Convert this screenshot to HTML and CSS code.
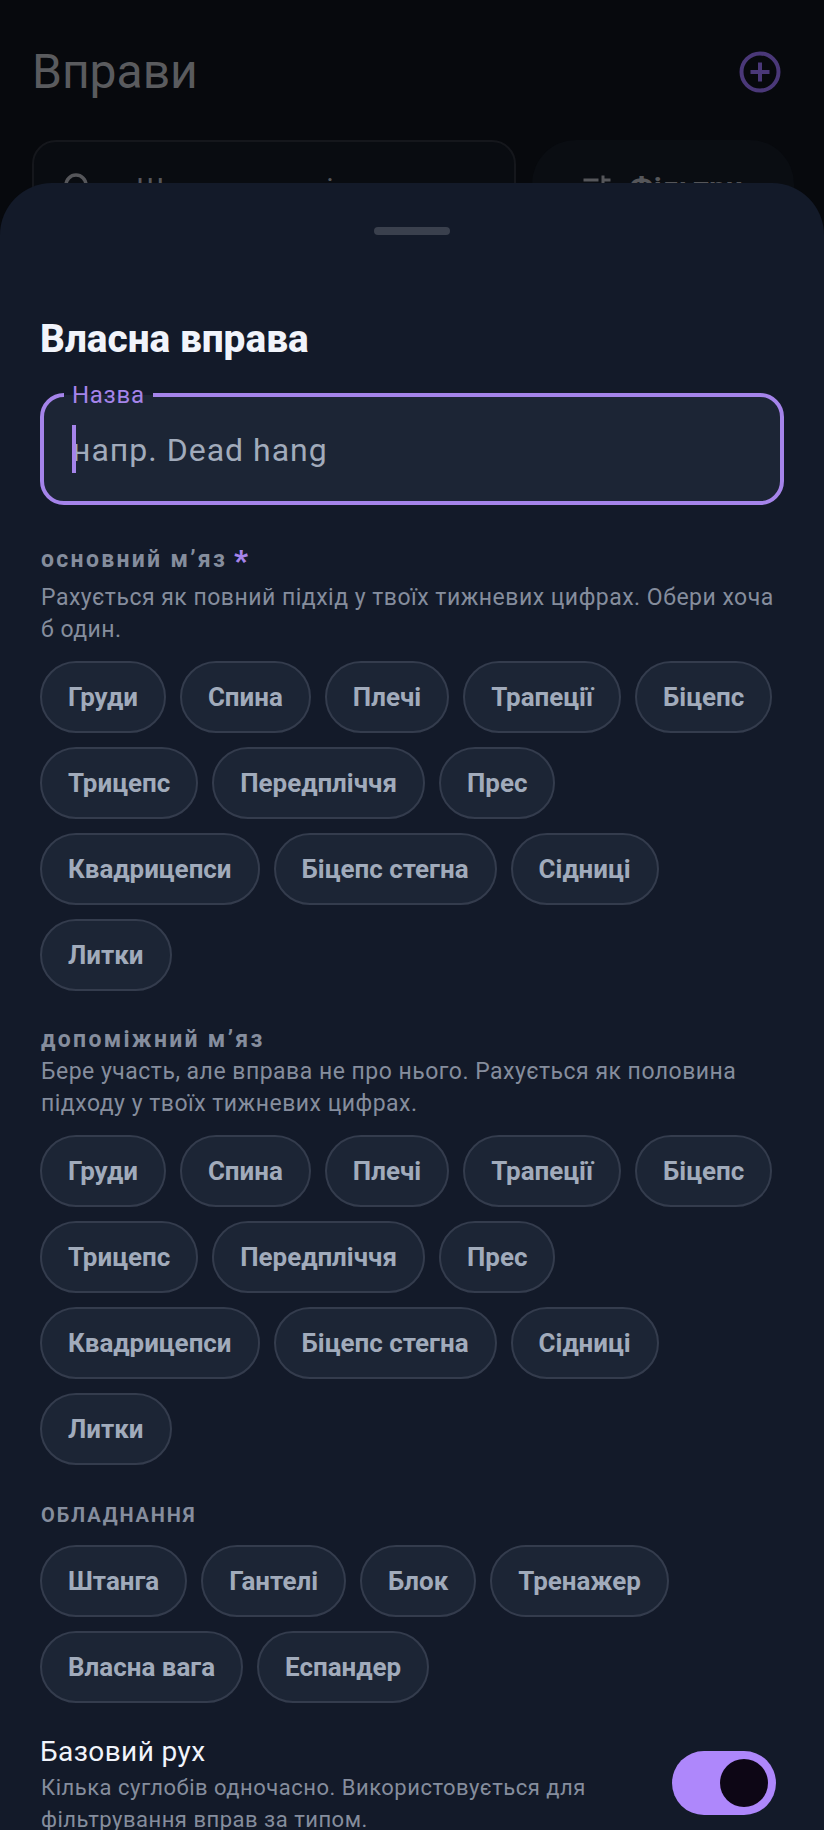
FILE: index.html
```html
<!DOCTYPE html>
<html lang="uk">
<head>
<meta charset="utf-8">
<title>Вправи</title>
<link rel="stylesheet" href="styles.css">
</head>
<body>
<div class="app">
  <header class="top">
    <h1 class="top-title">Вправи</h1>
    <svg class="add-icon" width="44" height="44" viewBox="0 0 44 44" fill="none" stroke="#4a3878" stroke-width="4"><circle cx="22" cy="22" r="18.5"/><path d="M22 12.5v19M12.5 22h19"/></svg>
  </header>
  <div class="tools">
    <div class="search">
      <svg width="32" height="32" viewBox="0 0 32 32" fill="none" stroke="#55565a" stroke-width="3.4"><circle cx="14" cy="14" r="10"/><path d="M21.5 21.5l8 8"/></svg>
      <span class="search-text">Шукати в назві</span>
    </div>
    <div class="filter">
      <svg class="filter-icon" width="36" height="36" viewBox="0 0 24 24" fill="#55565a"><path d="M3 17v2h6v-2H3zM3 5v2h10V5H3zm10 16v-2h8v-2h-8v-2h-2v6h2zM7 9v2H3v2h4v2h2V9H7zm14 4v-2H11v2h10zm-6-4h2V7h4V5h-4V3h-2v6z"/></svg>
      <span>Фільтри</span>
    </div>
  </div>
  <section class="sheet">
    <div class="handle"></div>
    <h2 class="sheet-title">Власна вправа</h2>
    <div class="field">
      <span class="field-label">Назва</span>
      <i class="caret"></i>
      <span class="placeholder">напр. Dead hang</span>
    </div>

    <h3 class="group-label primary">основний м’яз <b class="req">*</b></h3>
    <p class="hint">Рахується як повний підхід у твоїх тижневих цифрах. Обери хоча б один.</p>
    <div class="chips">
      <span class="chip">Груди</span><span class="chip">Спина</span><span class="chip">Плечі</span><span class="chip">Трапеції</span><span class="chip">Біцепс</span>
      <span class="chip">Трицепс</span><span class="chip">Передпліччя</span><span class="chip">Прес</span>
      <span class="chip">Квадрицепси</span><span class="chip">Біцепс стегна</span><span class="chip">Сідниці</span>
      <span class="chip">Литки</span>
    </div>

    <h3 class="group-label secondary">допоміжний м’яз</h3>
    <p class="hint tight">Бере участь, але вправа не про нього. Рахується як половина підходу у твоїх тижневих цифрах.</p>
    <div class="chips">
      <span class="chip">Груди</span><span class="chip">Спина</span><span class="chip">Плечі</span><span class="chip">Трапеції</span><span class="chip">Біцепс</span>
      <span class="chip">Трицепс</span><span class="chip">Передпліччя</span><span class="chip">Прес</span>
      <span class="chip">Квадрицепси</span><span class="chip">Біцепс стегна</span><span class="chip">Сідниці</span>
      <span class="chip">Литки</span>
    </div>

    <h3 class="group-label equip">ОБЛАДНАННЯ</h3>
    <div class="chips">
      <span class="chip">Штанга</span><span class="chip">Гантелі</span><span class="chip">Блок</span><span class="chip">Тренажер</span>
      <span class="chip">Власна вага</span><span class="chip">Еспандер</span>
    </div>

    <div class="toggle-row">
      <div class="toggle-text">
        <div class="toggle-title">Базовий рух</div>
        <p class="hint small">Кілька суглобів одночасно. Використовується для фільтрування вправ за типом.</p>
      </div>
      <div class="switch"><i class="knob"></i></div>
    </div>
  </section>
</div>
</body>
</html>
```
FILE: styles.css
```css
* { box-sizing: border-box; }
html, body { margin: 0; padding: 0; }
body { background: #07090d; font-family: Roboto, "Noto Sans", sans-serif; }
.app { position: relative; width: 824px; height: 1830px; overflow: hidden; background: #07090d; }

.top { display: flex; align-items: center; justify-content: space-between; padding: 42px 42px 0 32px; height: 102px; }
.top-title { margin: 0; font-size: 48px; font-weight: 400; color: #5a5b5e; line-height: 56px; }
.add-icon { display: block; }

.tools { display: flex; gap: 16px; padding: 38px 30px 0 32px; }
.search { width: 484px; height: 112px; display: flex; gap: 42px; padding: 29px 28px; border: 2px solid #15171c; border-radius: 24px; background: #090c11; color: #55565a; font-size: 30px; white-space: nowrap; }
.search-text { letter-spacing: -1.1px; }
.filter { flex: 1; height: 112px; display: flex; gap: 14px; justify-content: center; padding: 30px 4px 30px 0; border-radius: 44px; background: #0a0d12; color: #55565a; font-size: 30px; font-weight: 700; }
.filter-icon { margin-top: 1px; }

.sheet { position: absolute; left: 0; top: 183px; width: 824px; height: 1647px; overflow: hidden; padding: 0 40px; background: #131a29; border-radius: 52px 52px 0 0; }
.handle { width: 76px; height: 8px; margin: 44px auto 0; border-radius: 4px; background: #3a404d; }
.sheet-title { margin: 80px 0 0; font-size: 38.8px; line-height: 48px; font-weight: 800; color: #f1f4fb; }

.field { position: relative; height: 112px; margin-top: 30px; padding: 2px 32px 0; display: flex; align-items: center; background: #1c2535; border: 4px solid #a584ea; border-radius: 24px; }
.field-label { position: absolute; left: 20px; top: -14px; padding: 0 8px; font-size: 24px; line-height: 24px; letter-spacing: 0.7px; color: #a584ea; background: linear-gradient(#131a29 50%, #1c2535 50%); }
.caret { position: absolute; left: 28px; top: 28px; width: 4px; height: 48px; background: #a584ea; }
.placeholder { font-size: 32px; letter-spacing: 1px; color: #a1abbb; margin-left: -4px; }

.group-label { margin: 0; padding-left: 1px; font-size: 23px; line-height: 30px; font-weight: 700; letter-spacing: 2.3px; color: #858d9d; }
.primary { margin-top: 40px; }
.secondary { margin-top: 34px; }
.equip { margin-top: 35px; font-size: 20px; letter-spacing: 1.85px; }
.req { position: relative; top: 4px; color: #a584ea; font-size: 30px; line-height: 20px; letter-spacing: 0; margin-left: -1px; }
.hint { margin: 7px 0 0; padding-left: 1px; font-size: 23px; line-height: 32px; letter-spacing: 0.49px; color: #858d9d; }
.hint.tight { margin-top: 1px; }
.hint.small { font-size: 22px; letter-spacing: 0.5px; }

.chips { display: flex; flex-wrap: wrap; gap: 14px; margin-top: 15px; }
.chip { height: 72px; padding: 0 26px; display: flex; align-items: center; border: 2px solid #343c4d; border-radius: 36px; background: #1c2535; color: #a1abbb; font-size: 25.96px; font-weight: 700; }

.toggle-row { display: flex; justify-content: space-between; align-items: flex-start; margin-top: 31px; }
.toggle-text { width: 590px; }
.toggle-title { font-size: 28px; line-height: 36px; letter-spacing: 0.4px; color: #f1f4fb; }
.toggle-text .hint { margin-top: 2px; }
.switch { position: relative; flex: none; width: 104px; height: 64px; margin: 17px 8px 0 0; border-radius: 32px; background: #ae87fb; }
.knob { position: absolute; right: 8px; top: 8px; width: 48px; height: 48px; border-radius: 50%; background: #0d0615; }
```
